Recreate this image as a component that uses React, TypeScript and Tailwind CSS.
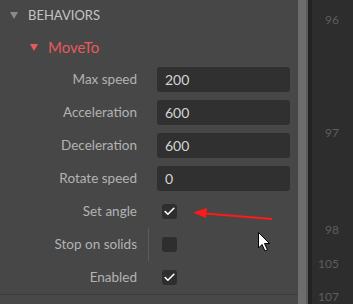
import { Check } from 'lucide-react';

type Row =
  | { label: string; kind: 'number'; value: string }
  | { label: string; kind: 'check'; checked: boolean; divider?: boolean };

const ROWS: Row[] = [
  { label: 'Max speed', kind: 'number', value: '200' },
  { label: 'Acceleration', kind: 'number', value: '600' },
  { label: 'Deceleration', kind: 'number', value: '600' },
  { label: 'Rotate speed', kind: 'number', value: '0' },
  { label: 'Set angle', kind: 'check', checked: true },
  { label: 'Stop on solids', kind: 'check', checked: false, divider: true },
  { label: 'Enabled', kind: 'check', checked: true },
];

// gutter line numbers, with the y of each label's centre
const LINES = [
  { n: '96', y: 20 },
  { n: '97', y: 133 },
  { n: '98', y: 230 },
  { n: '105', y: 264 },
  { n: '107', y: 297 },
];

function Caret({ color }: { color: string }) {
  return (
    <svg width="8" height="7" viewBox="0 0 8 7">
      <polygon points="0,0 8,0 4,7" fill={color} />
    </svg>
  );
}

export default function App() {
  return (
    <div
      className="relative flex w-[353px] h-[304px] overflow-hidden bg-[#2d2d2d] text-[13px]"
      style={{ fontFamily: 'Lato, "Noto Sans", sans-serif' }}
    >
      {/* Properties panel */}
      <div className="flex flex-col w-[298px] shrink-0 bg-[#474747]">
        <div className="flex items-center h-[31px] pl-[10px] gap-[10px] text-[#c4c4c4] text-[13px]">
          <Caret color="#8a8a8a" />
          <span>BEHAVIORS</span>
        </div>
        <div className="flex items-center h-[32px] pl-[30px] gap-[10px] text-[#e85a5a] text-[15px]">
          <Caret color="#e85a5a" />
          <span>MoveTo</span>
        </div>

        {ROWS.map((row) => (
          <div key={row.label} className="flex items-center h-[33px]">
            <div className="w-[137px] text-right text-[#b3b3b3] text-[13.5px]">{row.label}</div>
            <div className="w-[20px] h-full">
              {row.kind === 'check' && row.divider && (
                <div className="ml-[11px] w-px h-full bg-[#5b5b5b]" />
              )}
            </div>
            {row.kind === 'number' ? (
              <div className="flex items-center w-[133px] h-[25px] px-[8px] rounded-[3px] bg-[#303030] text-[#d4d4d4] text-[14px]">
                {row.value}
              </div>
            ) : (
              <div className="ml-[5px] flex items-center justify-center w-[15px] h-[15px] rounded-[3px] bg-[#2e2e2e]">
                {row.checked && <Check size={13} strokeWidth={3} className="text-white" />}
              </div>
            )}
          </div>
        ))}

        <div className="h-px bg-[#3c3c3c]" />
        <div className="flex-1 bg-[#484848]" />
      </div>

      {/* Scrollbar */}
      <div className="w-[8px] bg-[#6d6d6d]" />
      <div className="w-[2px] bg-[#5a5a5a]" />
      <div className="w-[4px] bg-[#222222]" />

      {/* Line number gutter */}
      <div className="flex flex-col w-[34px] pr-[7px] text-right text-[#5e5e5e] text-[12px]">
        {LINES.map((l, i) => {
          const prevBottom = i === 0 ? 0 : LINES[i - 1].y + 8;
          return (
            <div key={l.n} className="h-[16px] leading-[16px] shrink-0" style={{ marginTop: l.y - 8 - prevBottom }}>
              {l.n}
            </div>
          );
        })}
      </div>

      {/* Annotation arrow */}
      <svg className="absolute left-0 top-0 pointer-events-none" width="353" height="304">
        <line x1="205" y1="213.5" x2="272" y2="219" stroke="#ff1a1a" strokeWidth="2" />
        <polygon points="193,212.5 207,208 206,218" fill="#ff1a1a" />
        {/* mouse cursor */}
        <path
          d="M258.5 232.5 L258.5 248 L262 244.5 L265 251 L267.5 250 L264.5 243.5 L269.5 243.5 Z"
          fill="#ffffff"
          stroke="#000000"
          strokeWidth="1"
        />
      </svg>
    </div>
  );
}
